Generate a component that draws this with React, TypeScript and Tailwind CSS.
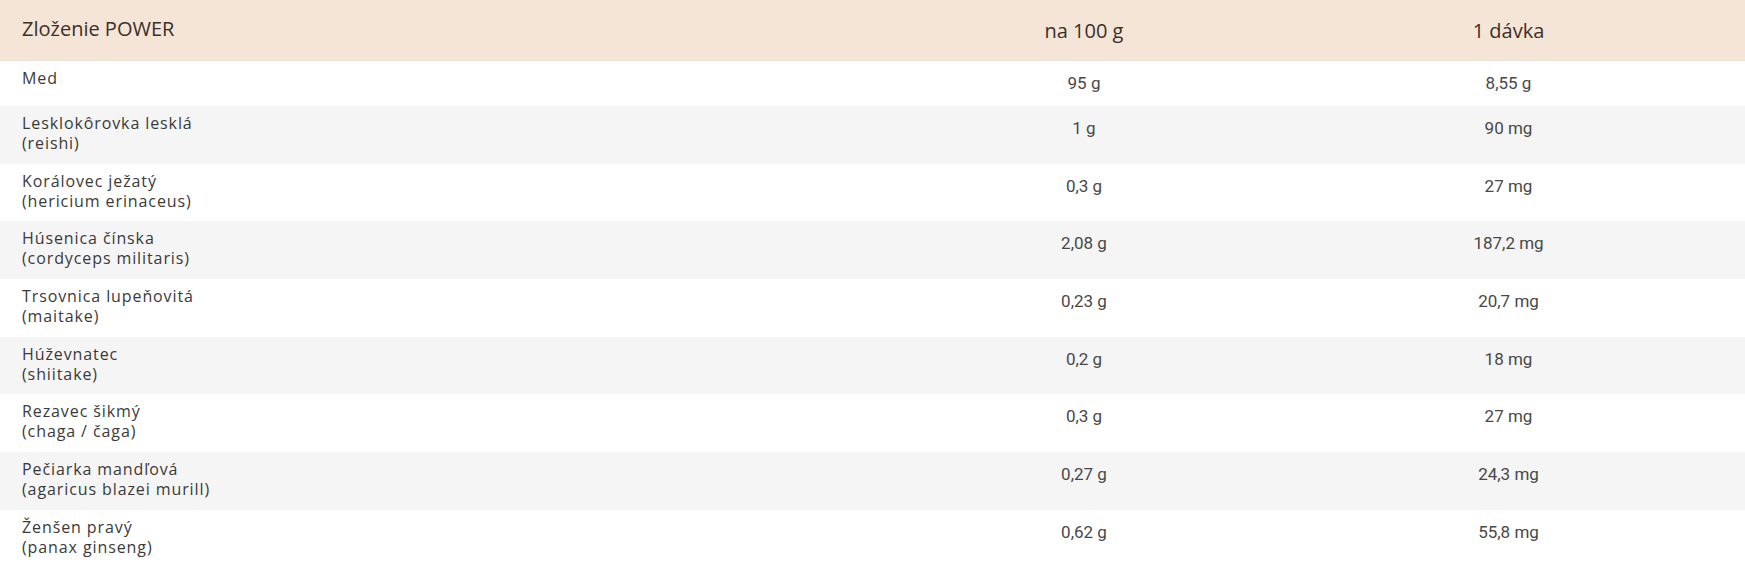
import React from 'react';

const rows = [
    { name: ['Med'], per100: '95 g', dose: '8,55 g' },
    { name: ['Lesklokôrovka lesklá', '(reishi)'], per100: '1 g', dose: '90 mg' },
    { name: ['Korálovec ježatý', '(hericium erinaceus)'], per100: '0,3 g', dose: '27 mg' },
    { name: ['Húsenica čínska', '(cordyceps militaris)'], per100: '2,08 g', dose: '187,2 mg' },
    { name: ['Trsovnica lupeňovitá', '(maitake)'], per100: '0,23 g', dose: '20,7 mg' },
    { name: ['Húževnatec', '(shiitake)'], per100: '0,2 g', dose: '18 mg' },
    { name: ['Rezavec šikmý', '(chaga / čaga)'], per100: '0,3 g', dose: '27 mg' },
    { name: ['Pečiarka mandľová', '(agaricus blazei murill)'], per100: '0,27 g', dose: '24,3 mg' },
    { name: ['Ženšen pravý', '(panax ginseng)'], per100: '0,62 g', dose: '55,8 mg' },
];

export default function App() {
    return (
        <div className="w-[1745px] bg-white font-['Open_Sans',sans-serif] text-[#3a3a3a]">
            {/* header */}
            <div className="grid grid-cols-[896px_376px_473px] h-[61px] bg-[#f5e5d6] border-b-2 border-[#efe4da] text-[#3b302a] text-[20px]">
                <div className="pl-[22px] pt-[14px]">Zloženie POWER</div>
                <div className="text-center pt-[16px]">na 100 g</div>
                <div className="text-center pt-[16px]">1 dávka</div>
            </div>

            {rows.map((r, i) => (
                <div
                    key={i}
                    className={`grid grid-cols-[896px_376px_473px] items-start ${i % 2 === 1 ? 'bg-[#f5f5f5]' : 'bg-white'}`}
                >
                    <div className="pl-[22px] pt-[7px] pb-[10.7px] text-[16px] leading-[20px] tracking-[0.9px]">
                        {r.name.map((l, j) => (
                            <div key={j}>{l}</div>
                        ))}
                    </div>
                    <div className="text-center pt-[12px] pb-[12px] text-[17px] leading-[21px] text-[#484848] font-['Roboto',sans-serif]">
                        {r.per100}
                    </div>
                    <div className="text-center pt-[12px] pb-[12px] text-[17px] leading-[21px] text-[#484848] font-['Roboto',sans-serif]">
                        {r.dose}
                    </div>
                </div>
            ))}
        </div>
    );
}
